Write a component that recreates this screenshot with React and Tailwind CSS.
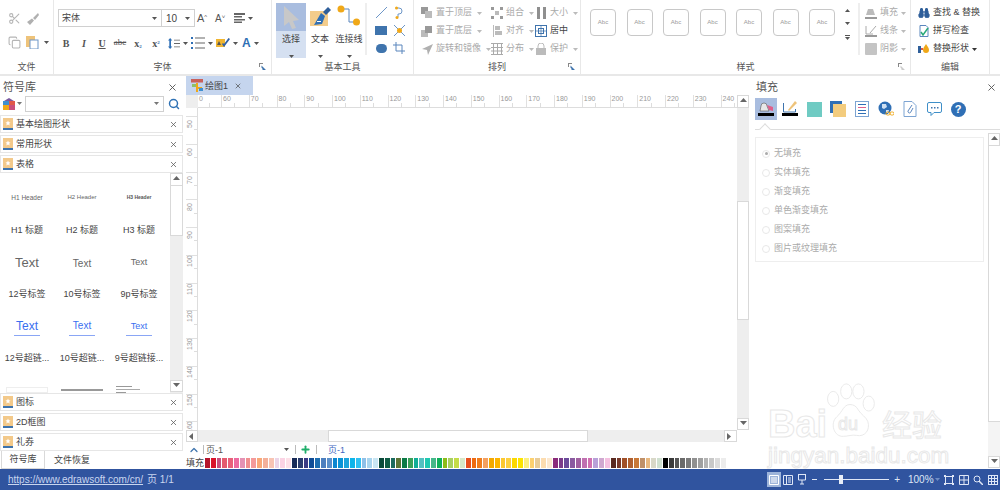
import React from "react";
import { Scissors, Search, X, ChevronUp, Plus, Copy, Binoculars } from "lucide-react";

const PALETTE = [
  "#b5152b", "#d9142a", "#c94f7c", "#e45a6e", "#e8607a", "#ec6aa0", "#e592b4", "#f08f8f", "#f49a9a", "#f9a878", "#f4b09a", "#f8c4b4", "#ecd5e8", "#fbd3e4", "#fde0e8",
  "#172a57", "#2a3c6f", "#3a3b84", "#0f4c96", "#1c6db0", "#4d7fbf", "#5b8fca", "#0b86d0", "#0a93d6", "#1ca4dc", "#0db4ea", "#2fc0f2", "#8ec0e8", "#a8d4ee", "#c9e6f4",
  "#0a4a3a", "#0f5c44", "#1b6a5e", "#5a7436", "#0b7a46", "#3aa058", "#11ad96", "#53c0c0", "#1fc8b0", "#45b88a", "#0eb05a", "#8cbc18", "#a8d060", "#c4dc48", "#d8e8c8",
  "#e8501e", "#ee6a10", "#f07c1c", "#f4a060", "#f4a800", "#fcb400", "#fcc830", "#fcd040", "#fcd800", "#fce400", "#fcf080", "#fcd070", "#e8cc98", "#fcdcb0", "#fce8d0",
  "#8a2a7a", "#7a3a8a", "#6a4a9a", "#8a5aa0", "#a060a0", "#c070b0", "#d070b0", "#b8a0d8", "#d0a8d0", "#f4c0e0",
  "#5a2a20", "#7a3a2a", "#a05028", "#b06030", "#c87838", "#c09068", "#e8b880", "#d8d8c8", "#d0e0d0",
  "#000000", "#3a3a3a", "#555555", "#6a6a6a", "#7a7a7a", "#909090", "#a0a0a0", "#b4b4b4", "#c8c8c8", "#dcdcdc", "#ececec",
];

const HRULER = [50, 60, 70, 80, 90, 100, 110, 120, 130, 140, 150, 160, 170, 180, 190, 200, 210, 220, 230, 240];
const VRULER = [50, 60, 70, 80, 90, 100, 110, 120, 130, 140, 150, 160];
const FILL_OPTIONS = ["无填充", "实体填充", "渐变填充", "单色渐变填充", "图案填充", "图片或纹理填充"];

const Caret = ({ className = "text-[#555]" }) => (
  <svg width="5" height="3" viewBox="0 0 5 3" className={`shrink-0 ${className}`}>
    <path d="M0 0h5L2.5 3z" fill="currentColor" />
  </svg>
);

const Launcher = ({ color = "#5a7fb5" }) => (
  <svg width="7" height="7" viewBox="0 0 7 7">
    <path d="M0 0h4v1H1v3H0z" fill="#888" />
    <path d="M2.5 2.5 7 7H3.5V5.8L2.5 4.8z" fill={color} />
  </svg>
);

const Star = () => (
  <svg width="10" height="13" viewBox="0 0 10 13" className="shrink-0">
    <rect width="10" height="10" fill="#f3c98a" />
    <rect y="10" width="10" height="2" fill="#3f74ad" />
    <path d="M5 2.5 5.8 4.3 7.6 4.4 6.2 5.6 6.7 7.4 5 6.4 3.3 7.4 3.8 5.6 2.4 4.4 4.2 4.3z" fill="#fff" />
  </svg>
);

const ScrollBtn = ({ dir = "up", className = "" }) => {
  const paths = { up: "M0 4 3.5 0 7 4z", down: "M0 0h7L3.5 4z", left: "M4 0v7L0 3.5z", right: "M0 0v7l4-3.5z" };
  return (
    <div className={`flex items-center justify-center bg-white border border-[#d9d9d9] shrink-0 ${className}`}>
      <svg width="7" height="7" viewBox="0 0 7 7">
        <path d={paths[dir]} fill="#666" />
      </svg>
    </div>
  );
};

const Group = ({ label, width, launcher, children }) => (
  <div className={`flex flex-col h-full border-r border-[#e8e8e8] shrink-0 ${width}`}>
    <div className="h-[60px] flex">{children}</div>
    <div className="h-[15px] pt-[3px] relative flex items-center justify-center text-[9px] text-[#555]">
      {label}
      {launcher && (
        <span className="absolute right-[5px] top-[4px] flex">
          <Launcher color={launcher} />
        </span>
      )}
    </div>
  </div>
);

const ArrangeItem = ({ icon, text, dark, width }) => (
  <div className={`h-[18px] flex items-center gap-[3px] ${width}`}>
    <span className="w-[12px] flex justify-center shrink-0">{icon}</span>
    <span className={`text-[9px] whitespace-nowrap ${dark ? "text-[#444]" : "text-[#aaa]"}`}>{text}</span>
    {!dark && <Caret className="text-[#bbb] ml-[2px]" />}
  </div>
);

const StackIcon = ({ top }) => (
  <svg width="12" height="12" viewBox="0 0 12 12">
    <rect x="0" y={top ? 0 : 5} width="7" height="7" fill={top ? "#999" : "#bbb"} />
    <rect x="4" y={top ? 4 : 1} width="7" height="7" fill={top ? "#bbb" : "#999"} />
  </svg>
);

const FontTool = ({ children, w = "w-[18px]" }) => (
  <span className={`flex items-center justify-center text-[#555] ${w}`}>{children}</span>
);

const Ribbon = () => (
  <div className="h-[76px] flex bg-white border-b-2 border-[#e8e8e8] shrink-0">
    <Group label="文件" width="w-[54px]">
      <div className="flex flex-col gap-[8px] pl-[8px] pt-[10px]">
        <div className="flex items-center gap-[5px] h-[16px]">
          <Scissors size={13} className="text-[#b5b5b5]" />
          <svg width="13" height="13" viewBox="0 0 13 13">
            <path d="M12 1 7 6 9 8 13 3zM6 6.5 1 10l3 3 4-4.500z" fill="#b0b0b0" />
          </svg>
        </div>
        <div className="flex items-center gap-[5px] h-[16px]">
          <Copy size={13} className="text-[#b5b5b5]" />
          <svg width="13" height="14" viewBox="0 0 13 14">
            <rect x="0" y="1" width="9" height="11" fill="#eec37a" />
            <rect x="4" y="5" width="8" height="9" fill="#fff" stroke="#6d96c7" />
          </svg>
          <Caret />
        </div>
      </div>
    </Group>

    <Group label="字体" width="w-[218px]" launcher="#3f74ad">
      <div className="flex flex-col pl-[4px] pt-[9px] w-full">
        <div className="flex items-center h-[18px]">
          <div className="w-[104px] h-[18px] border border-[#d0d0d0] flex items-center justify-between pl-[3px] pr-[4px] text-[9px] text-[#444]">
            <span className="pt-[2px]">宋体</span>
            <Caret />
          </div>
          <div className="w-[33px] h-[18px] border border-l-0 border-[#d0d0d0] flex items-center justify-between pl-[4px] pr-[4px] text-[10px] text-[#444]">
            10
            <Caret />
          </div>
          <span className="w-[18px] pl-[2px] text-[11px] text-[#555]">A<sup className="text-[6px]">^</sup></span>
          <span className="w-[18px] pl-[2px] text-[10px] text-[#555]">A<sup className="text-[6px]">˅</sup></span>
          <span className="flex items-center gap-[3px] ml-[3px]">
            <svg width="11" height="10" viewBox="0 0 11 10">
              <path d="M0 0h11v2H0zM0 3h8v1.500H0zM0 6h11v1.500H0zM0 8.500h8V10H0z" fill="#666" />
            </svg>
            <Caret />
          </span>
        </div>
        <div className="flex items-center h-[18px] mt-[7px] -ml-[1px] font-['Liberation_Serif',serif] text-[10px]">
          <FontTool><b>B</b></FontTool>
          <FontTool><i className="font-bold">I</i></FontTool>
          <FontTool><u className="font-bold">U</u></FontTool>
          <FontTool><s className="text-[9px]">abc</s></FontTool>
          <FontTool><b>x<sub className="text-[5px] text-[#3f74ad]">2</sub></b></FontTool>
          <FontTool><b>x<sup className="text-[5px] text-[#3f74ad]">2</sup></b></FontTool>
          <span className="flex items-center gap-[3px] w-[26px] pl-[3px]">
            <svg width="12" height="13" viewBox="0 0 14 13">
              <path d="M2.500 0 5 3H3.500v7H5l-2.500 3L0 10h1.500V3H0z" fill="#2f6fb5" />
              <path d="M7 2h7v1H7zM7 6h7v1H7zM7 10h7v1H7z" fill="#666" />
            </svg>
            <Caret />
          </span>
          <span className="flex items-center gap-[3px] w-[25px]">
            <svg width="14" height="12" viewBox="0 0 14 12">
              <path d="M0 0h2v2H0zM0 5h2v2H0zM0 10h2v2H0z" fill="#2f6fb5" />
              <path d="M4 .5h10v1H4zM4 5.500h10v1H4zM4 10.500h10v1H4z" fill="#666" />
            </svg>
            <Caret />
          </span>
          <span className="flex items-center gap-[3px] w-[26px]">
            <svg width="14" height="10" viewBox="0 0 14 10">
              <rect y="1" width="9" height="8" fill="#f0b530" />
              <path d="m6 6 2 3 6-8-1.500-1L8 6 7 5z" fill="#2f5fa5" />
              <path d="M1 7 3 3l2 4z" fill="#555" />
            </svg>
            <Caret />
          </span>
          <span className="flex items-center gap-[3px] font-bold text-[#2f6fb5] text-[12px] font-['Liberation_Sans',sans-serif]">
            A
            <Caret />
          </span>
        </div>
      </div>
    </Group>

    <Group label="基本工具" width="w-[142px]">
      <div className="flex pl-[4px] pt-[3px]">
        <div className="w-[30px] h-[55px] flex flex-col bg-[#d5e0f1]">
          <div className="h-[28px] bg-[#a9bddf] flex items-center justify-center">
            <svg width="18" height="25" viewBox="0 0 18 25">
              <path d="M2 1 17 15l-6 1 3 7-4 1-3-7-5 4z" fill="#c8c8c8" />
            </svg>
          </div>
          <span className="text-[9px] text-[#444] text-center mt-[2px]">选择</span>
          <span className="flex justify-center mt-[8px]"><Caret /></span>
        </div>
        <div className="w-[28px] flex flex-col items-center">
          <div className="h-[28px] flex items-center">
            <svg width="22" height="22" viewBox="0 0 22 22">
              <rect x="1" y="5" width="18" height="15" fill="#f3cc8b" />
              <path d="M5 19 12 7l4 3-3 8z" fill="#2f6fb5" />
              <path d="M14 6 19 1l3 3-5 5z" fill="#2f5f9a" />
              <path d="M8 15h4v1H8z" fill="#fff" />
            </svg>
          </div>
          <span className="text-[9px] text-[#444] mt-[2px]">文本</span>
          <span className="mt-[8px]"><Caret /></span>
        </div>
        <div className="w-[30px] flex flex-col items-center">
          <div className="h-[28px] flex items-center">
            <svg width="24" height="24" viewBox="0 0 24 24">
              <path d="M5 4h7v13h8" fill="none" stroke="#5b86bd" strokeWidth="1" />
              <circle cx="4" cy="4" r="3.500" fill="#f0a818" />
              <circle cx="19.500" cy="17" r="3.500" fill="#f0a818" />
            </svg>
          </div>
          <span className="text-[9px] text-[#444] mt-[2px] whitespace-nowrap">连接线</span>
          <span className="mt-[8px]"><Caret /></span>
        </div>
        <div className="w-[2px] h-[52px] bg-[#eeeeee] ml-[1px]" />
        <div className="grid grid-cols-2 grid-rows-3 w-[36px] h-[54px] ml-[5px] place-items-center">
          <svg width="13" height="13" viewBox="0 0 13 13"><path d="M1 12 12 1" stroke="#6d96c7" /></svg>
          <svg width="8" height="13" viewBox="0 0 8 13">
            <path d="M2 2h2a3 3 0 0 1 0 6H3v3" fill="none" stroke="#6d96c7" />
            <circle cx="1.500" cy="2" r="1.500" fill="#f0a818" />
            <circle cx="2" cy="11.500" r="1.500" fill="#f0a818" />
          </svg>
          <span className="w-[12px] h-[9px] bg-[#3f74ad]" />
          <svg width="13" height="13" viewBox="0 0 13 13">
            <path d="M1 1l11 11M12 1 1 12" stroke="#6d96c7" />
            <circle cx="6.500" cy="6.500" r="2.500" fill="#f0a818" />
          </svg>
          <span className="w-[11px] h-[9px] rounded-full bg-[#3f74ad]" />
          <svg width="12" height="12" viewBox="0 0 12 12">
            <path d="M3 0v9h9M0 3h9v9" fill="none" stroke="#5b86bd" />
          </svg>
        </div>
      </div>
    </Group>

    <Group label="排列" width="w-[167px]" launcher="#3f74ad">
      <div className="flex pl-[7px] pt-[4px]">
        <div className="flex flex-col w-[70px]">
          <ArrangeItem icon={<StackIcon top />} text="置于顶层" />
          <ArrangeItem icon={<StackIcon />} text="置于底层" />
          <ArrangeItem
            icon={
              <svg width="11" height="11" viewBox="0 0 11 11"><path d="M11 0 0 5l5 1 1 5z" fill="#b0b0b0" /></svg>
            }
            text="旋转和镜像"
          />
        </div>
        <div className="flex flex-col w-[44px]">
          <ArrangeItem
            icon={
              <svg width="12" height="12" viewBox="0 0 12 12">
                <path d="M0 0h3v3H0zM9 0h3v3H9zM0 9h3v3H0zM9 9h3v3H9z" fill="#999" />
                <path d="M4 4h4v4H4z" fill="#bbb" />
              </svg>
            }
            text="组合"
          />
          <ArrangeItem
            icon={
              <svg width="11" height="12" viewBox="0 0 11 12"><path d="M1 0h1v12H1zM3 1h5v4H3zM3 6h7v4H3z" fill="#bbb" /></svg>
            }
            text="对齐"
          />
          <ArrangeItem
            icon={
              <svg width="12" height="12" viewBox="0 0 12 12">
                <path d="M0 0h12v1H0zM0 11h12v1H0zM0 4h12v1H0zM0 7.500h12v1H0zM2 0h1v12H2zM6 0h1v12H6zM10 0h1v12h-1z" fill="#aaa" />
              </svg>
            }
            text="分布"
          />
        </div>
        <div className="flex flex-col w-[38px]">
          <ArrangeItem
            icon={
              <svg width="9" height="12" viewBox="0 0 9 12"><path d="M0 0h3v12H0zM6 0h3v12H6z" fill="#8f8f8f" /></svg>
            }
            text="大小"
          />
          <ArrangeItem
            dark
            icon={
              <svg width="12" height="12" viewBox="0 0 12 12">
                <rect x=".5" y=".5" width="11" height="11" fill="#fff" stroke="#3f74ad" />
                <rect x="3.500" y="3.500" width="5" height="5" fill="none" stroke="#3f74ad" />
                <path d="M6 1v10M1 6h10" stroke="#3f74ad" strokeWidth=".7" />
              </svg>
            }
            text="居中"
          />
          <ArrangeItem
            icon={
              <svg width="10" height="12" viewBox="0 0 10 12">
                <path d="M2 5V3a3 3 0 0 1 6 0v2" fill="none" stroke="#bbb" />
                <rect y="5" width="10" height="7" fill="#bbb" />
              </svg>
            }
            text="保护"
          />
        </div>
      </div>
    </Group>

    <Group label="样式" width="w-[330px]" launcher="#cccccc">
      <div className="flex pl-[9px] pt-[9px] w-full">
        <div className="flex gap-[10.500px]">
          {[0, 1, 2, 3, 4, 5, 6].map((i) => (
            <div
              key={i}
              className="w-[26px] h-[27px] rounded-[4px] border border-[#c8c8c8] flex items-center justify-center text-[6px] text-[#999]"
            >
              Abc
            </div>
          ))}
        </div>
        <div className="flex flex-col items-center gap-[10px] w-[20px] ml-[2px]">
          <Caret className="text-[#555] rotate-180" />
          <Caret />
          <span className="flex flex-col items-center gap-[1px]">
            <span className="w-[5px] h-px bg-[#555]" />
            <Caret />
          </span>
        </div>
        <div className="w-[2px] h-[52px] bg-[#eeeeee] ml-[1px] -mt-[6px]" />
        <div className="flex flex-col -mt-[5px] ml-[5px]">
          {[
            ["填充", <svg key="a" width="12" height="12" viewBox="0 0 12 12"><path d="M3 2h5l2 6H1z" fill="#bbb" /><path d="M0 10h12v2H0z" fill="#999" /></svg>],
            ["线条", <svg key="b" width="12" height="12" viewBox="0 0 12 12"><path d="M1 1v8h7M11 1 5 8" fill="none" stroke="#aaa" /><path d="M0 10h12v2H0z" fill="#999" /></svg>],
            ["阴影", <span key="c" className="block w-[12px] h-[12px] bg-[#c4c4c4] rounded-[1px]" />],
          ].map(([text, icon]) => (
            <div key={text} className="h-[18px] flex items-center gap-[3px]">
              <span className="w-[12px] flex justify-center">{icon}</span>
              <span className="text-[9px] text-[#aaa]">{text}</span>
              <Caret className="text-[#bbb]" />
            </div>
          ))}
        </div>
      </div>
    </Group>

    <Group label="编辑" width="w-[79px]">
      <div className="flex flex-col pl-[7px] pt-[4px]">
        <div className="h-[18px] flex items-center gap-[3px] whitespace-nowrap text-[9px] text-[#444]">
          <Binoculars size={12} className="text-[#2f5f9a] shrink-0" fill="#2f5f9a" />
          查找 &amp; 替换
        </div>
        <div className="h-[18px] flex items-center gap-[3px] whitespace-nowrap text-[9px] text-[#444]">
          <svg width="12" height="12" viewBox="0 0 12 12" className="shrink-0">
            <path d="M2 .5h6l2 2v9H2z" fill="#fff" stroke="#5b86bd" />
            <path d="m3 7 2 3 5-7" fill="none" stroke="#28a878" strokeWidth="1.500" />
          </svg>
          拼写检查
        </div>
        <div className="h-[18px] flex items-center gap-[3px] whitespace-nowrap text-[9px] text-[#444]">
          <svg width="12" height="10" viewBox="0 0 12 10" className="shrink-0">
            <rect y="2" width="3" height="7" fill="#2f5f9a" />
            <path d="M8 0c2 3 3 4 3 6a3 3 0 0 1-6 0c0-2 1-3 3-6z" fill="#f0a818" />
            <path d="M3 4h2v2H3z" fill="#e0584a" />
          </svg>
          替换形状
          <Caret className="text-[#333]" />
        </div>
      </div>
    </Group>
  </div>
);

const SymbolRow = ({ name, mb = "mb-[2px]", h = "h-[18px]" }) => (
  <div className={`${h} ${mb} w-[183px] shrink-0 border border-[#e6e6e6] flex items-center pl-[2px] pr-[4px] text-[9px] text-[#444]`}>
    <Star />
    <span className="ml-[3px] pt-[2px] flex-1">{name}</span>
    <X size={9} className="text-[#555]" strokeWidth={2} />
  </div>
);

const Cell = ({ children, className = "" }) => (
  <div className={`flex items-center justify-center whitespace-nowrap ${className}`}>{children}</div>
);

const SymbolPanel = () => (
  <div className="w-[186px] shrink-0 flex flex-col bg-white">
    <div className="h-[19px] flex items-center justify-between pl-[3px] pr-[8px] pt-[3px] text-[11px] text-[#555]">
      符号库
      <X size={11} className="text-[#555]" />
    </div>
    <div className="h-[17px] flex items-center pl-[3px]">
      <svg width="12" height="12" viewBox="0 0 12 12" className="shrink-0">
        <rect y="3" width="6" height="4" fill="#3f8fd0" />
        <rect x="6" y="3" width="6" height="4" fill="#e0584a" />
        <rect y="7" width="6" height="5" fill="#f0a818" />
        <rect x="6" y="7" width="6" height="5" fill="#c94f7c" />
        <path d="M1 3 6 0l5 3z" fill="#7a5aa0" />
      </svg>
      <Caret className="text-[#777] ml-[2px]" />
      <div className="w-[139px] h-[16px] border border-[#d0d0d0] ml-[3px] flex items-center justify-end pr-[4px]">
        <Caret className="text-[#777]" />
      </div>
      <Search size={12} strokeWidth={3} className="text-[#2f72b5] ml-[4px]" />
    </div>
    <div className="h-[3px]" />
    <SymbolRow name="基本绘图形状" />
    <SymbolRow name="常用形状" />
    <SymbolRow name="表格" mb="mb-0" />
    <div className="h-[220px] w-[183px] shrink-0 flex overflow-hidden">
      <div className="w-[170px] grid grid-cols-[54px_56px_58px] grid-rows-[41px_33px_32px_32px_32px_31px_19px] text-[#444] text-[9px]">
        <Cell className="text-[6.500px] text-[#666] pt-[8px]">H1 Header</Cell>
        <Cell className="text-[6px] text-[#666] pt-[8px]">H2 Header</Cell>
        <Cell className="text-[5px] text-[#555] pt-[8px] font-bold">H3 Header</Cell>
        <Cell>H1 标题</Cell>
        <Cell>H2 标题</Cell>
        <Cell>H3 标题</Cell>
        <Cell className="text-[13px] text-[#666]">Text</Cell>
        <Cell className="text-[10px] text-[#666]">Text</Cell>
        <Cell className="text-[9px] text-[#666]">Text</Cell>
        <Cell>12号标签</Cell>
        <Cell>10号标签</Cell>
        <Cell>9p号标签</Cell>
        <Cell className="flex-col text-[12px] text-[#3a6ff0]"><span className="leading-[14px]">Text</span><span className="w-[26px] h-px bg-[#8aa6f5] mt-[2px]" /></Cell>
        <Cell className="flex-col text-[10px] text-[#3a6ff0]"><span className="leading-[14px]">Text</span><span className="w-[26px] h-px bg-[#8aa6f5] mt-[2px]" /></Cell>
        <Cell className="flex-col text-[9px] text-[#3a6ff0]"><span className="leading-[14px]">Text</span><span className="w-[26px] h-px bg-[#8aa6f5] mt-[2px]" /></Cell>
        <Cell>12号超链...</Cell>
        <Cell>10号超链...</Cell>
        <Cell>9号超链接...</Cell>
        <Cell className="items-end"><span className="w-[42px] h-[6px] border border-[#eeeeee]" /></Cell>
        <Cell className="items-end"><span className="w-[42px] h-[2px] mb-[2px] bg-[#999]" /></Cell>
        <Cell className="items-end justify-start pl-[6px]">
          <span className="flex flex-col gap-[2px]"><span className="w-[16px] h-px bg-[#999]" /><span className="w-[24px] h-px bg-[#aaa]" /><span className="w-[10px] h-px bg-[#999]" /></span>
        </Cell>
      </div>
      <div className="w-[13px] flex flex-col bg-[#eeeeee]">
        <ScrollBtn dir="up" className="h-[13px]" />
        <div className="h-[50px] bg-white border border-t-0 border-[#d9d9d9]" />
        <div className="flex-1" />
        <ScrollBtn dir="down" className="h-[12px] mb-[1px]" />
      </div>
    </div>
    <SymbolRow name="图标" />
    <SymbolRow name="2D框图" />
    <SymbolRow name="礼券" mb="mb-0" />
    <div className="h-[18px] flex text-[9px] text-[#444]">
      <div className="w-[44px] ml-px pt-[1px] border-r border-b border-l border-[#d9d9d9] flex items-center justify-center">符号库</div>
      <div className="w-[86px] pt-[1px] flex items-center pl-[9px]">文件恢复</div>
    </div>
  </div>
);

const RulerH = () => (
  <div className="h-[13px] flex shrink-0">
    <div className="w-[12px] bg-[#eeeeee] shrink-0" />
    <div className="flex-1 flex overflow-hidden border-b border-[#dddddd]">
      {HRULER.map((n, i) => (
        <div key={n} className={`h-full flex flex-col border-r border-[#e0e0e0] shrink-0 ${i === 0 ? "w-[24px]" : "w-[27.750px]"}`}>
          <span className="h-[8px] leading-[8px] text-[7px] text-[#999] pl-[1px]">{i === 0 ? "0" : n}</span>
          <span className="w-1/2 h-[4px] border-r border-[#dddddd]" />
        </div>
      ))}
    </div>
  </div>
);

const RulerV = () => (
  <div className="w-[12px] shrink-0 flex flex-col overflow-hidden border-r border-[#dddddd]">
    <div className="h-[8px] shrink-0" />
    {VRULER.map((n) => (
      <div key={n} className="h-[27.750px] shrink-0 flex border-t border-[#e0e0e0]">
        <span className="w-[8px] text-[7px] leading-[8px] text-[#999] [writing-mode:vertical-rl] rotate-180 h-[10px] mt-[1px] whitespace-nowrap">{n}</span>
        <span className="w-[3px] h-1/2 border-b border-[#dddddd]" />
      </div>
    ))}
  </div>
);

const PageBar = () => (
  <div className="h-[27px] flex flex-col shrink-0">
    <div className="h-[15px] flex items-center text-[9px]">
      <ChevronUp size={12} strokeWidth={2.500} className="text-[#3f74ad] ml-[2px]" />
      <span className="w-px h-[9px] bg-[#bbbbbb] ml-[3px]" />
      <span className="w-[80px] pl-[2px] pt-[2px] text-[#555]">页-1</span>
      <Caret />
      <span className="w-px h-[9px] bg-[#bbbbbb] ml-[6px]" />
      <Plus size={11} strokeWidth={4} className="text-[#1fae6a] ml-[4px]" />
      <span className="w-px h-[9px] bg-[#bbbbbb] ml-[5px]" />
      <span className="ml-[11px] pt-[2px] text-[#3f66c0]">页-1</span>
    </div>
    <div className="h-[12px] flex items-center text-[9px] text-[#444]">
      <span className="w-[19px] pt-[2px] shrink-0">填充</span>
      <div className="w-[521px] h-[10px] flex gap-px">
        {PALETTE.map((c, i) => (
          <span key={i} className="flex-1" style={{ backgroundColor: c }} />
        ))}
      </div>
    </div>
  </div>
);

const CanvasArea = () => (
  <div className="w-[563px] shrink-0 flex flex-col">
    <div className="h-[19px] shrink-0 flex">
      <div className="w-[67px] bg-[#c5d5ee] flex items-center pl-[5px] gap-[1px] text-[9px] text-[#444]">
        <svg width="13" height="13" viewBox="0 0 13 13" className="shrink-0">
          <rect width="12" height="3.500" fill="#c9605a" />
          <path d="M5 4h2v4h4v2H7v3H5z" fill="#f0a818" />
          <rect x="8" y="9" width="4" height="3" fill="#3f8fd0" />
          <rect x="1" y="5" width="4" height="3" fill="#8fc06a" />
        </svg>
        <span className="pt-[2px]">绘图1</span>
        <X size={8} strokeWidth={2} className="text-[#444] ml-[5px]" />
      </div>
    </div>
    <div className="flex h-[335px] shrink-0">
      <div className="w-[551px] flex flex-col shrink-0">
        <RulerH />
        <div className="h-[322px] flex shrink-0">
          <RulerV />
          <div className="flex-1 bg-white" />
        </div>
      </div>
      <div className="w-[12px] flex flex-col bg-[#eeeeee]">
        <ScrollBtn dir="up" className="h-[13px]" />
        <div className="h-[93px]" />
        <div className="h-[119px] bg-white border border-[#d9d9d9]" />
        <div className="flex-1" />
        <ScrollBtn dir="down" className="h-[12px]" />
      </div>
    </div>
    <div className="h-[12px] w-[551px] flex bg-[#eeeeee] shrink-0">
      <ScrollBtn dir="left" className="w-[12px]" />
      <div className="w-[130px]" />
      <div className="w-[260px] bg-white border border-[#d9d9d9]" />
      <div className="flex-1" />
      <ScrollBtn dir="right" className="w-[13px]" />
    </div>
    <PageBar />
  </div>
);

const FillIcon = ({ children }) => (
  <span className="w-[24px] h-[22px] flex items-center justify-center shrink-0">{children}</span>
);

const FillIcons = () => (
  <div className="h-[22px] flex items-center">
    <div className="w-[22px] h-[22px] mr-[1px] bg-[#a9bddf] flex items-center justify-center shrink-0">
      <svg width="16" height="16" viewBox="0 0 16 16">
        <path d="M3 5a3 3 0 0 1 6 0l2 5H2z" fill="#e8e8e8" stroke="#555" strokeWidth=".6" />
        <path d="m9 4 6 2v4l-4-1z" fill="#e0608a" />
        <rect y="12" width="16" height="3" fill="#000" />
      </svg>
    </div>
    <FillIcon>
      <svg width="16" height="16" viewBox="0 0 16 16">
        <path d="M1.500 2v9h12V8" fill="#fff" stroke="#3f74ad" />
        <path d="M13 0 6 9l1 1 8-8z" fill="#eec37a" />
        <rect y="12" width="16" height="3" fill="#000" />
      </svg>
    </FillIcon>
    <FillIcon><span className="w-[15px] h-[15px] bg-[#6fcbc3]" /></FillIcon>
    <FillIcon>
      <span className="w-[16px] h-[16px] relative">
        <span className="absolute left-0 top-0 w-[12px] h-[12px] bg-[#2f6fb5]" />
        <span className="absolute left-[3px] top-[3px] w-[13px] h-[13px] bg-[#f3cc7e]" />
      </span>
    </FillIcon>
    <FillIcon>
      <svg width="14" height="16" viewBox="0 0 14 16">
        <rect x=".5" y=".5" width="13" height="15" fill="#fff" stroke="#7da4d2" />
        <path d="M3 3h8v1H3zM3 9h8v1H3zM3 12h8v1H3z" fill="#2f6fb5" />
        <path d="M3 6h8v1H3z" fill="#e0608a" />
      </svg>
    </FillIcon>
    <FillIcon>
      <svg width="16" height="16" viewBox="0 0 16 16">
        <circle cx="7" cy="7" r="6.500" fill="#2f6fb5" />
        <path d="M4 3h4l1 3-3 2-2-1zM8 9h3l-1 3H8z" fill="#cfe0f2" />
        <rect x="8" y="11" width="4" height="3" rx="1.500" fill="none" stroke="#f0a818" />
        <rect x="12" y="11" width="4" height="3" rx="1.500" fill="none" stroke="#f0a818" />
      </svg>
    </FillIcon>
    <FillIcon>
      <svg width="14" height="16" viewBox="0 0 14 16">
        <path d="M1 .5h8l4 4v11H1z" fill="#fff" stroke="#7da4d2" />
        <path d="M9 4 5 10a1.500 1.500 0 0 0 2.500 1.500L10 7" fill="none" stroke="#5b86bd" />
      </svg>
    </FillIcon>
    <FillIcon>
      <svg width="15" height="15" viewBox="0 0 15 15">
        <path d="M2 .5h11a1.500 1.500 0 0 1 1.500 1.500v7a1.500 1.500 0 0 1-1.500 1.500H7l-3 3v-3H2A1.500 1.500 0 0 1 .5 9V2A1.500 1.500 0 0 1 2 .5z" fill="#fff" stroke="#3f8fc8" />
        <path d="M4 5h1.500v1.500H4zM7 5h1.500v1.500H7zM10 5h1.500v1.500H10z" fill="#3f74ad" />
      </svg>
    </FillIcon>
    <FillIcon>
      <span className="w-[15px] h-[15px] rounded-full bg-[#2f6fb5] text-white text-[11px] font-bold leading-[15px] text-center">?</span>
    </FillIcon>
  </div>
);

const FillPanel = () => (
  <div className="flex-1 flex flex-col bg-white pl-[3px] min-w-0">
    <div className="h-[19px] flex items-center justify-between pl-[2px] pr-[3px] pt-[3px] text-[11px] text-[#555]">
      <span className="pl-[2px]">填充</span>
      <X size={11} className="text-[#555]" />
    </div>
    <div className="pl-[3px] pt-[3px]">
      <FillIcons />
    </div>
    <div className="h-[10px] relative border-b border-[#dddddd] ml-[3px]">
      <span className="absolute left-[6px] top-[5px] w-[8px] h-[8px] rotate-45 bg-white border-l border-t border-[#dddddd]" />
    </div>
    <div className="flex flex-1 min-h-0">
      <div className="flex-1 pt-[3px]">
        <div className="w-[229px] h-[125px] ml-[3px] mt-[4px] border border-[#eeeeee] pt-[6px]">
          {FILL_OPTIONS.map((label, i) => (
            <div key={label} className="h-[19px] flex items-center pl-[6px] gap-[4px] text-[9px] text-[#aaaaaa]">
              <span className="w-[8px] h-[8px] rounded-full border border-[#e8e8e8] flex items-center justify-center">
                {i === 0 && <span className="w-[3px] h-[3px] rounded-full bg-[#aaaaaa]" />}
              </span>
              {label}
            </div>
          ))}
        </div>
      </div>
      <div className="w-[12px] flex flex-col pt-[3px]">
        <ScrollBtn dir="up" className="h-[13px]" />
        <div className="h-[276px] border-l border-b border-[#d9d9d9]" />
        <div className="flex-1 bg-[#f4f4f4]" />
        <ScrollBtn dir="down" className="h-[12px] mb-px" />
      </div>
    </div>
  </div>
);

const StatusBar = () => (
  <div className="h-[21px] bg-[#30549f] flex items-center shrink-0 text-[10px] text-[#c9d6ef] pl-[8px]">
    <span className="underline">https://www.edrawsoft.com/cn/</span>
    <span className="ml-[4px]">页 1/1</span>
    <div className="flex-1" />
    <div className="flex items-center text-[#dfe7f6]">
      <span className="w-[14px] h-[15px] bg-[#9db4da] flex items-center justify-center">
        <svg width="10" height="10" viewBox="0 0 10 10"><path d="M.5.5h9v9h-9zM2 3h6M2 5h6M2 7h6" fill="none" stroke="#fff" /></svg>
      </span>
      <svg width="10" height="10" viewBox="0 0 10 10" className="ml-[2px]"><path d="M.5.5h9v9h-9zM3.500.5v9M5 3h3M5 5h3M5 7h3" fill="none" stroke="currentColor" /></svg>
      <svg width="10" height="11" viewBox="0 0 10 11" className="ml-[4px]"><path d="M1 .5h8M1.500 1v5h7V1M5 6v4M3 10h4" fill="none" stroke="currentColor" /></svg>
      <span className="w-[5px] h-px bg-current ml-[5px]" />
      <div className="w-[65px] h-px bg-[#dfe7f6] ml-[7px] relative">
        <span className="absolute left-[15px] -top-[4px] w-[4px] h-[9px] bg-[#e8eef8]" />
      </div>
      <span className="ml-[5px] text-[10px] leading-none">+</span>
      <span className="ml-[8px] w-[25px] text-[#dfe7f6]">100%</span>
      <Caret className="text-[#6f8cc4] ml-[2px]" />
      <svg width="10" height="10" viewBox="0 0 10 10" className="ml-[4px]"><path d="M1.500 1.500h7v7h-7z" fill="none" stroke="currentColor" /><path d="M0 0h2v2H0zM8 0h2v2H8zM0 8h2v2H0zM8 8h2v2H8z" fill="currentColor" /></svg>
      <svg width="10" height="10" viewBox="0 0 10 10" className="ml-[5px]"><path d="M.5.5h9v9h-9zM.5 5h9M5 .5v9" fill="none" stroke="currentColor" /></svg>
      <svg width="10" height="10" viewBox="0 0 10 10" className="ml-[4px]"><circle cx="4" cy="4" r="3" fill="none" stroke="currentColor" /><path d="m6 6 4 4" stroke="currentColor" strokeWidth="1.500" /></svg>
      <svg width="10" height="10" viewBox="0 0 10 10" className="ml-[5px] mr-[2px]"><path d="M0 .5h10M0 3.500h10M0 6.500h10M0 9.500h10M.5 0v10M3.500 0v10M6.500 0v10M9.500 0v10" stroke="currentColor" /></svg>
    </div>
  </div>
);

// faint baidu watermark in the bottom right corner
const Watermark = () => (
  <div className="absolute left-[768px] top-[383px] w-[180px] h-[85px] pointer-events-none text-white font-['Liberation_Sans',sans-serif] [-webkit-text-stroke:1px_#e8e8e8]">
    <svg width="50" height="58" viewBox="0 0 50 62" className="absolute left-[57px] top-0" fill="#fff" stroke="#e8e8e8" strokeWidth="1">
      <ellipse cx="7" cy="17" rx="6" ry="8" />
      <ellipse cx="21" cy="9" rx="6" ry="8" />
      <ellipse cx="34" cy="9" rx="6" ry="8" />
      <ellipse cx="45" cy="22" rx="6" ry="8" />
      <path d="M25 23c-7 0-8 8-14 13-8 7-3 22 7 21 5 0 9-2 14-1 9 2 15-6 12-15-2-5-7-7-10-12-2-4-5-6-9-6z" />
    </svg>
    <span className="absolute left-0 top-[21px] text-[38px] font-bold leading-[40px]">Bai</span>
    <span className="absolute left-[70px] top-[31px] text-[18px] leading-[20px]">du</span>
    <span className="absolute left-[114px] top-[24px] text-[30px] leading-[32px] font-['Noto_Sans_CJK_SC',sans-serif]">经验</span>
    <span className="absolute left-0 top-[61px] text-[22.500px] leading-[24px] whitespace-nowrap">jingyan.baidu.com</span>
  </div>
);

export default function App() {
  return (
    <div className="w-[1000px] h-[490px] flex flex-col overflow-hidden relative bg-white font-['Liberation_Sans','Noto_Sans_CJK_SC',sans-serif]">
      <Ribbon />
      <div className="h-[393px] flex shrink-0">
        <SymbolPanel />
        <CanvasArea />
        <FillPanel />
      </div>
      <StatusBar />
      <Watermark />
    </div>
  );
}
